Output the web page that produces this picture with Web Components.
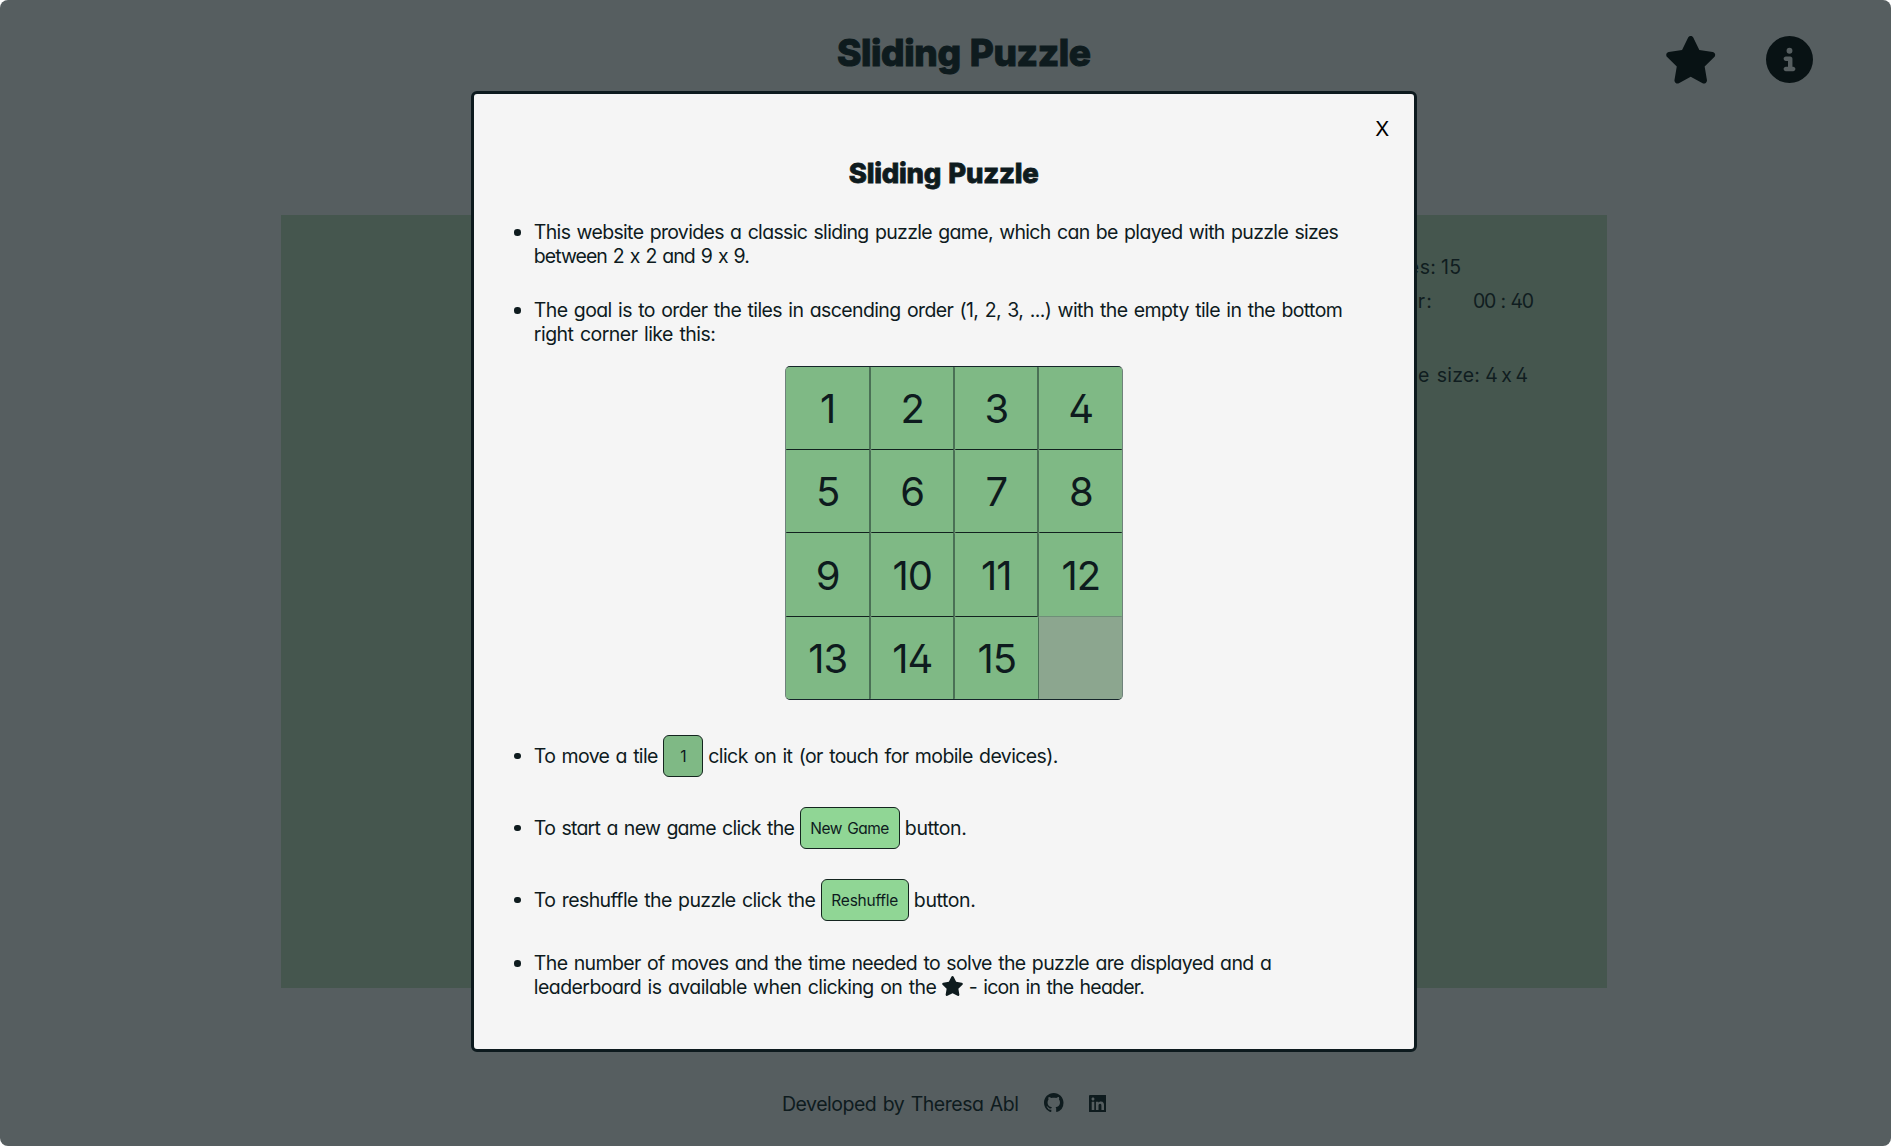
<!DOCTYPE html>
<html lang="en"><head><meta charset="utf-8"><title>Sliding Puzzle</title>
<style>
html,body{margin:0;height:100%;background:#fff;overflow:hidden}
body{font-family:Inter,"Liberation Sans",sans-serif;font-feature-settings:"cv11","cv02","calt" 0;color:#0e1b1e;font-size:19.5px;line-height:24px}
</style></head><body>
<puzzle-app></puzzle-app>
<script>
const define=(name,html,setup)=>customElements.define(name,class extends HTMLElement{
  connectedCallback(){
    if(this.shadowRoot)return;
    const root=this.attachShadow({mode:"open"});
    root.innerHTML=html;
    if(setup)setup(this,root);
  }
});

/* A run of text spaced to an exact width. */
define("text-run",`<style>:host{display:inline-block;white-space:pre}span{display:inline-block;word-spacing:1.5px}</style><span><slot></slot></span>`,(el,root)=>{
  const span=root.querySelector("span"),w=+el.getAttribute("w");
  const n=el.textContent.length;
  const natural=span.getBoundingClientRect().width;
  if(n>1)span.style.letterSpacing=((w-natural)/(n-1))+"px";
  el.style.width=w+"px";
});

const icons={
 star:["0 0 576 512","M316.9 18C311.6 7 300.4 0 288.1 0s-23.4 7-28.8 18L195 150.3 51.4 171.5c-12 1.8-22 10.2-25.7 21.700s-.7 24.200 7.900 32.700L137.800 329 113.200 474.700c-2 12 3 24.200 12.900 31.300s23 8 33.800 2.300l128.300-68.500 128.300 68.500c10.800 5.700 23.900 4.900 33.800-2.300s14.900-19.300 12.900-31.300L438.500 329 542.700 225.900c8.600-8.500 11.700-21.200 7.900-32.700s-13.700-19.900-25.700-21.700L381.200 150.300 316.900 18z"],
 info:["0 0 512 512","M256 512A256 256 0 1 0 256 0a256 256 0 1 0 0 512zM216 336h24V272H216c-13.300 0-24-10.700-24-24s10.700-24 24-24h48c13.300 0 24 10.700 24 24v88h8c13.300 0 24 10.700 24 24s-10.700 24-24 24H216c-13.300 0-24-10.700-24-24s10.700-24 24-24zm40-208a32 32 0 1 1 0 64 32 32 0 1 1 0-64z"],
 github:["0 0 16 16","M8 0C3.580 0 0 3.580 0 8c0 3.540 2.290 6.530 5.470 7.590.4.070.55-.17.55-.38 0-.19-.01-.82-.01-1.490-2.010.37-2.530-.49-2.690-.94-.09-.23-.48-.94-.82-1.130-.28-.15-.68-.52-.01-.53.63-.01 1.080.58 1.230.82.72 1.210 1.870.87 2.330.66.07-.52.28-.87.51-1.070-1.780-.2-3.640-.89-3.640-3.950 0-.87.31-1.590.82-2.150-.08-.2-.36-1.020.08-2.120 0 0 .67-.21 2.200.82.64-.18 1.320-.27 2-.27s1.360.09 2 .27c1.530-1.040 2.200-.82 2.200-.82.44 1.100.16 1.920.08 2.120.51.56.82 1.270.82 2.150 0 3.070-1.870 3.750-3.650 3.950.29.25.54.73.54 1.480 0 1.070-.01 1.930-.01 2.200 0 .21.15.46.55.38A8.010 8.010 0 0 0 16 8c0-4.420-3.580-8-8-8z"],
 linkedin:["0 32 448 448","M416 32H31.900C14.300 32 0 46.500 0 64.300v383.400C0 465.500 14.300 480 31.900 480H416c17.600 0 32-14.500 32-32.300V64.300c0-17.800-14.400-32.300-32-32.300zM135.400 416H69V202.200h66.500V416zm-33.200-243c-21.300 0-38.500-17.300-38.500-38.500S80.900 96 102.200 96c21.200 0 38.500 17.300 38.500 38.500 0 21.300-17.200 38.500-38.500 38.500zm282.100 243h-66.400V312c0-24.800-.5-56.700-34.500-56.700-34.600 0-39.900 27-39.900 54.900V416h-66.400V202.200h63.700v29.200h.9c8.900-16.800 30.600-34.500 62.900-34.500 67.200 0 79.700 44.300 79.700 101.900V416z"]
};
define("app-icon",`<style>:host{display:inline-block}svg{display:block;width:100%;height:100%;fill:currentColor}</style><svg><path fill-rule="evenodd"/></svg>`,(el,root)=>{
  const [box,d]=icons[el.getAttribute("name")];
  root.querySelector("svg").setAttribute("viewBox",box);
  root.querySelector("path").setAttribute("d",d);
});

define("site-header",`<style>
:host{display:grid;grid-template-columns:1fr auto 1fr;height:215px;box-sizing:border-box;align-items:start}
h1{grid-column:2;margin:0;padding:28px 0 0 37px;font-size:37px;font-weight:850;line-height:49px;-webkit-text-stroke:1px}
nav{grid-column:3;justify-self:end;display:flex;gap:49px;padding:36px 78px 0 0;color:#081214}
.s{width:53.400px;height:47.500px}.i{width:47px;height:47px}
</style><h1><text-run w="254">Sliding Puzzle</text-run></h1><nav><app-icon class="s" name="star"></app-icon><app-icon class="i" name="info"></app-icon></nav>`);

define("game-area",`<style>
:host{display:flex;justify-content:flex-end;width:1326px;height:773px;margin-left:281px;background:#45564e;box-sizing:border-box;padding:40px 80px 0 0}
.stats{display:grid;grid-template-rows:34px 34px 40px 34px;width:160px;color:#101d20}
.row{display:flex;align-items:center;height:24px}.time{margin-left:41px}.count{margin-left:5px}.size{grid-row:4}
</style><div class="stats"><div class="row"><text-run w="69">Moves:</text-run><text-run class="count" w="20">15</text-run></div><div class="row"><text-run w="65">Timer:</text-run><text-run class="time" w="61">00 : 40</text-run></div><div class="row size"><text-run w="113">Puzzle size:</text-run><text-run w="48"> 4 x 4</text-run></div></div>`);

define("site-footer",`<style>
:host{display:flex;justify-content:flex-start;align-items:center;margin-top:103.500px;height:24px;padding-left:782px}
.g{width:19.500px;height:19.500px;margin:-1px 0 0 25px}.l{width:17.500px;height:17.500px;margin-left:25px}
</style><text-run w="237">Developed by Theresa Abl</text-run><app-icon class="g" name="github"></app-icon><app-icon class="l" name="linkedin"></app-icon>`);

define("puzzle-board",`<style>
:host{display:grid;grid-template-columns:85px 84px 84px 83px;grid-template-rows:83px 83px 84px 82px;width:336px;border:1px solid #16252a;border-left-color:#6f827b;border-right-color:#6f827b;border-radius:5px;background:#8ca68f;overflow:hidden}
div{box-sizing:border-box;display:flex;align-items:center;justify-content:center;background:#7fb985;border-right:2px solid #4a7055;border-bottom:1px solid #12211f;border-radius:1px;font-size:40px;line-height:48px;letter-spacing:-1px;padding-top:2px}
div.edge{border-right:0}div.above{border-bottom-color:#6f8f78}div.bottom{border-bottom:0}
div.beside{border-right-width:1px}div:empty{background:#8ca68f}
</style>`,(el,root)=>{
  for(let n=1;n<=16;n++){
    const d=document.createElement("div");
    if(n<16)d.textContent=n;
    d.classList.toggle("edge",n%4===0);
    d.classList.toggle("above",n===12);
    d.classList.toggle("beside",n===15);
    d.classList.toggle("bottom",n>12);
    root.append(d);
  }
});

define("key-chip",`<style>
:host{display:inline-flex;box-sizing:border-box;height:42px;align-items:center;justify-content:center;border:1px solid #14251f;border-radius:6px;background:#90d695;font-size:15.500px;padding-top:2px}
:host([tile]){background:#7fb985}
</style><slot></slot>`);

define("info-item",`<style>
:host{display:flex;gap:13px;align-items:flex-start}
i{flex:none;width:6.600px;height:6.600px;border-radius:50%;background:#0e1b1e;margin-top:9px}
:host([inline]){align-items:center}:host([inline]) i{margin-top:0}
.body{display:flex;flex-direction:column}
:host([inline]) .body{flex-direction:row;align-items:center}
:host([inline]) ::slotted(text-run){margin-top:-1px}
</style><i></i><div class="body"><slot></slot></div>`);

define("info-dialog",`<style>
:host{position:absolute;left:471.250px;top:91px;width:946px;height:961px;box-sizing:border-box;border:3px solid #0d1a1e;border-radius:6px;background:#f5f5f5;display:flex;flex-direction:column;color:#0e1b1e}
.close{align-self:flex-end;margin:23px 24px 0 0;font-size:20.500px;line-height:24px;color:#000}
h2{align-self:center;margin:14px 0 0;padding-right:1px;font-size:27.500px;line-height:36px;font-weight:850;-webkit-text-stroke:.8px}
.list{display:flex;flex-direction:column;padding-left:40px}
.a{margin-top:29px}.b{margin-top:30px}puzzle-board{margin:20px 0 35px 271px}
.chips{display:flex;flex-direction:column;gap:30px}
.c1{width:40px;margin:0 5px}.c2{width:100px;margin:0 5px}.c3{width:88px;margin:0 5px}
.last{margin-top:30px}.line{display:flex;align-items:center;height:24px}.line app-icon{width:23px;height:20px;margin:0 5px 3px 4px}
</style>
<text-run class="close" w="15">X</text-run>
<h2><text-run w="190">Sliding Puzzle</text-run></h2>
<div class="list">
<info-item class="a"><text-run w="805">This website provides a classic sliding puzzle game, which can be played with puzzle sizes</text-run><text-run w="216">between 2 x 2 and 9 x 9.</text-run></info-item>
<info-item class="b"><text-run w="809">The goal is to order the tiles in ascending order (1, 2, 3, ...) with the empty tile in the bottom</text-run><text-run w="182">right corner like this:</text-run></info-item>
<puzzle-board></puzzle-board>
<div class="chips">
<info-item inline><text-run w="124.500">To move a tile</text-run><key-chip tile class="c1">1</key-chip><text-run w="350">click on it (or touch for mobile devices).</text-run></info-item>
<info-item inline><text-run w="261">To start a new game click the</text-run><key-chip class="c2"><text-run w="79">New Game</text-run></key-chip><text-run w="62">button.</text-run></info-item>
<info-item inline><text-run w="282">To reshuffle the puzzle click the</text-run><key-chip class="c3"><text-run w="67">Reshuffle</text-run></key-chip><text-run w="62">button.</text-run></info-item>
</div>
<info-item class="last"><text-run w="738">The number of moves and the time needed to solve the puzzle are displayed and a</text-run><div class="line"><text-run w="403">leaderboard is available when clicking on the</text-run><app-icon name="star"></app-icon><text-run w="176">- icon in the header.</text-run></div></info-item>
</div>`);

define("puzzle-app",`<style>:host{display:block;position:relative;width:1891px;height:1146px;box-sizing:border-box;background:#565e60;border-radius:8px;overflow:hidden;color:#0e1b1e}</style><site-header></site-header><game-area></game-area><site-footer></site-footer><info-dialog></info-dialog>`);
</script></body></html>
